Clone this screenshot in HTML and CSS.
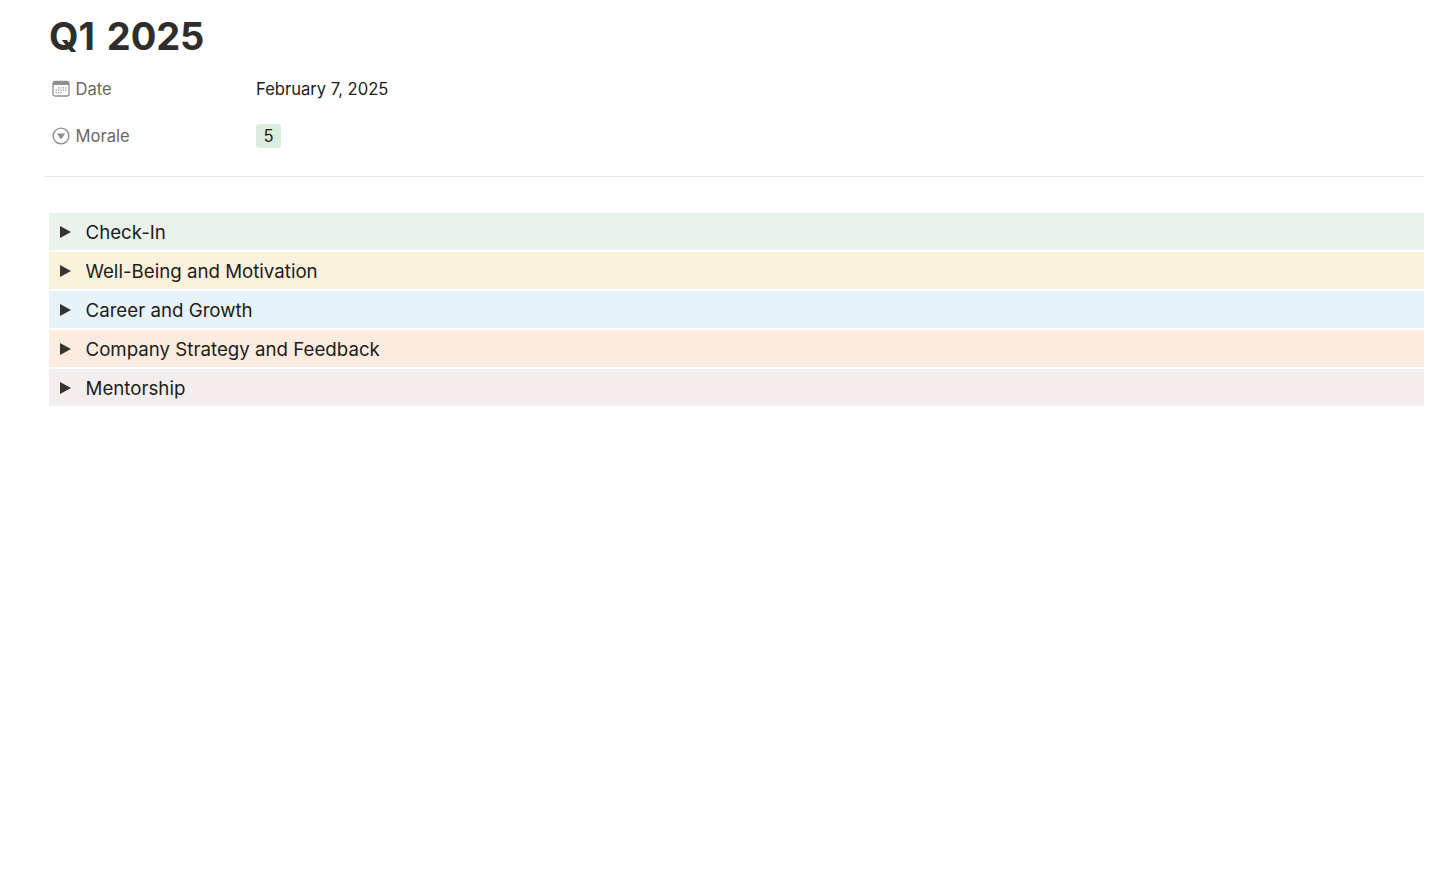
FILE: index.html
```html
<!DOCTYPE html>
<html lang="en">
<head>
<meta charset="utf-8">
<title>Q1 2025</title>
<link rel="stylesheet" href="styles.css">
</head>
<body>
<main class="page">
  <h1 class="title">Q1 2025</h1>
  <section class="props">
    <div class="prop">
      <div class="prop-name">
        <svg class="prop-icon" viewBox="0 0 18 18" width="18" height="18" aria-hidden="true">
          <rect x="1" y="1.5" width="16" height="14.5" rx="2" fill="#fff" stroke="#8f8e8b" stroke-width="1.3"/>
          <path d="M1 3.5a2 2 0 0 1 2-2h12a2 2 0 0 1 2 2v1.5H1z" fill="#8f8e8b"/>
          <g fill="#9b9a97">
            <rect x="6" y="7.2" width="1.3" height="1.3"/><rect x="8.4" y="7.2" width="1.3" height="1.3"/><rect x="10.8" y="7.2" width="1.3" height="1.3"/><rect x="13.2" y="7.2" width="1.3" height="1.3"/>
            <rect x="3.6" y="9.6" width="1.3" height="1.3"/><rect x="6" y="9.6" width="1.3" height="1.3"/><rect x="8.4" y="9.6" width="1.3" height="1.3"/><rect x="10.8" y="9.6" width="1.3" height="1.3"/><rect x="13.2" y="9.6" width="1.3" height="1.3"/>
            <rect x="3.6" y="12" width="1.3" height="1.3"/><rect x="6" y="12" width="1.3" height="1.3"/><rect x="8.4" y="12" width="1.3" height="1.3"/>
          </g>
        </svg>
        <span>Date</span>
      </div>
      <div class="prop-value">February 7, 2025</div>
    </div>
    <div class="prop">
      <div class="prop-name">
        <svg class="prop-icon" viewBox="0 0 18 18" width="18" height="18" aria-hidden="true">
          <circle cx="9" cy="9" r="7.9" fill="#fff" stroke="#8f8e8b" stroke-width="1.4"/>
          <path d="M4.9 6.6h8.2L9 12.6z" fill="#8f8e8b"/>
        </svg>
        <span>Morale</span>
      </div>
      <div class="prop-value"><span class="tag">5</span></div>
    </div>
  </section>
  <hr class="divider">
  <section class="toggles">
    <div class="toggle green"><svg class="caret" viewBox="0 0 11 12" width="11" height="12" aria-hidden="true"><path d="M0 0l11 6-11 6z"/></svg><span>Check-In</span></div>
    <div class="toggle yellow"><svg class="caret" viewBox="0 0 11 12" width="11" height="12" aria-hidden="true"><path d="M0 0l11 6-11 6z"/></svg><span>Well-Being and Motivation</span></div>
    <div class="toggle blue"><svg class="caret" viewBox="0 0 11 12" width="11" height="12" aria-hidden="true"><path d="M0 0l11 6-11 6z"/></svg><span>Career and Growth</span></div>
    <div class="toggle orange"><svg class="caret" viewBox="0 0 11 12" width="11" height="12" aria-hidden="true"><path d="M0 0l11 6-11 6z"/></svg><span>Company Strategy and Feedback</span></div>
    <div class="toggle rose"><svg class="caret" viewBox="0 0 11 12" width="11" height="12" aria-hidden="true"><path d="M0 0l11 6-11 6z"/></svg><span>Mentorship</span></div>
  </section>
</main>
</body>
</html>
```

FILE: styles.css
```css
* {
  box-sizing: border-box;
}

html,
body {
  margin: 0;
  background: #fff;
}

body {
  height: 870px;
  overflow: hidden;
  font-family: Inter, "Liberation Sans", sans-serif;
  color: #1d1c19;
}

.page {
  padding: 13px 32px 0 44px;
}

.title {
  margin: 0 0 0 5px;
  font-size: 38px;
  line-height: 46px;
  font-weight: 700;
  letter-spacing: -0.05px;
  word-spacing: 3px;
  color: #2f2e2a;
}

.props {
  display: flex;
  flex-direction: column;
  margin-top: 12px;
  gap: 11px;
}

.prop {
  display: flex;
  align-items: center;
  height: 36px;
}

.prop-name {
  display: flex;
  align-items: center;
  width: 212px;
  padding-left: 8px;
  gap: 5.5px;
  font-size: 16.6px;
  color: #696864;
}

.prop-icon {
  flex: none;
}

.prop-value {
  font-size: 16.6px;
  color: #1d1c19;
}

.tag {
  display: block;
  width: 25px;
  height: 24px;
  border-radius: 3px;
  background: #dbeddf;
  text-align: center;
  font-size: 16.6px;
  line-height: 24px;
}

.divider {
  height: 1px;
  margin: 22px 0 0;
  border: 0;
  background: #e6e6e4;
}

.toggles {
  display: flex;
  flex-direction: column;
  gap: 2px;
  margin: 36px 0 0 5px;
}

.toggle {
  display: flex;
  align-items: center;
  height: 37px;
  padding: 2px 0 0 11px;
  font-size: 18.7px;
  color: #1d1c19;
}

.caret {
  flex: none;
  margin: -2px 14.5px 0 0;
  fill: #34332e;
}

.green {
  background: #ebf2eb;
}

.yellow {
  background: #fbf2dc;
}

.blue {
  background: #e6f3f9;
}

.orange {
  background: #fcecdf;
}

.rose {
  background: #f5eeee;
}
```
